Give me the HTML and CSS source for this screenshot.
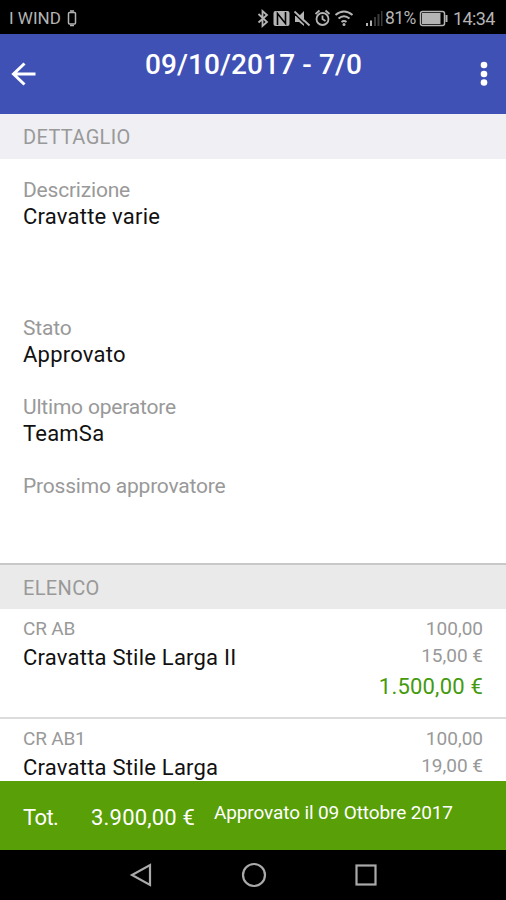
FILE: index.html
```html
<!DOCTYPE html>
<html lang="it">
<head>
<meta charset="utf-8">
<title>Dettaglio</title>
<link rel="stylesheet" href="styles.css">
</head>
<body>
<div class="screen">
  <div class="status">
    <span class="carrier">I WIND</span>
    <svg class="sim" width="10" height="17" viewBox="0 0 10 17"><path d="M3 1h4M3 15.500h4"/><rect x="1.500" y="2.500" width="7" height="11.500" rx="1"/></svg>
    <svg class="icons" width="132" height="22" viewBox="255 6 132 22">
      <path stroke-width="1.800" d="M258.500 13l8.500 8-4.500 4V10l4.500 4-8.500 7.500"/>
      <rect class="solid" x="273.500" y="10" width="16" height="15" rx="2"/><path class="cut" d="M277.500 24V12.500l8 10V11"/>
      <path class="solid" d="M295 15h4l5-5v15l-5-4h-4z"/><path class="cut" d="M294 12l15 15"/><path stroke-width="1.800" d="M294.500 10.500l15 14"/>
      <circle stroke-width="1.800" cx="322.500" cy="18" r="6"/><path stroke-width="1.800" d="M322.500 14.500V18l3 2M315.500 13l4-3.500M329.500 13l-4-3.500"/>
      <path stroke-width="2" d="M335.500 14q8.500-7 17 0M338.500 17.500q5.500-4.500 11 0M341.500 21q2.500-2 5 0"/><circle class="solid" cx="344" cy="23.500" r="1.500"/>
      <path class="solid" d="M366 22h2v3h-2zM370 19.500h2V25h-2z"/><path class="faint" d="M374 16h2v9h-2zM377.500 13h2v12h-2zM381 10h1.500v15H381z"/>
    </svg>
    <span class="percent">81%</span>
    <svg class="battery" width="30" height="17" viewBox="0 0 30 17"><rect x="1.500" y="1.500" width="24" height="14" rx="2"/><path class="solid" d="M3 3h18.500v11H3zM26.500 5h2v7h-2z"/></svg>
    <span class="clock">14:34</span>
  </div>
  <header class="bar">
    <svg class="back" width="26" height="26" viewBox="0 0 26 26"><path d="M24.500 13H3M13.500 2.500L2.500 13l11 10.500"/></svg>
    <h1 class="title">09/10/2017 - 7/0</h1>
    <svg class="more" width="8" height="26" viewBox="0 0 8 26"><circle cx="4" cy="4" r="3.300"/><circle cx="4" cy="13" r="3.300"/><circle cx="4" cy="21.500" r="3.300"/></svg>
  </header>
  <main class="content">
    <h2 class="section">DETTAGLIO</h2>
    <dl class="details">
      <div class="field tall"><dt>Descrizione</dt><dd>Cravatte varie</dd></div>
      <div class="field"><dt>Stato</dt><dd>Approvato</dd></div>
      <div class="field"><dt>Ultimo operatore</dt><dd>TeamSa</dd></div>
      <div class="field"><dt>Prossimo approvatore</dt></div>
    </dl>
    <h2 class="section list-head">ELENCO</h2>
    <div class="item">
      <div class="product"><div class="code">CR AB</div><div class="name">Cravatta Stile Larga II</div></div>
      <div class="figures"><div class="qty">100,00</div><div class="price">15,00 €</div><div class="sum">1.500,00 €</div></div>
    </div>
    <div class="item">
      <div class="product"><div class="code">CR AB1</div><div class="name">Cravatta Stile Larga</div></div>
      <div class="figures"><div class="qty">100,00</div><div class="price">19,00 €</div></div>
    </div>
  </main>
  <footer class="total"><span class="tot">Tot.</span><span class="amount">3.900,00 €</span><span class="approved">Approvato il 09 Ottobre 2017</span></footer>
  <nav class="nav">
    <svg width="24" height="26" viewBox="0 0 24 26"><path d="M21 3v20L3 13z"/></svg>
    <svg width="26" height="26" viewBox="0 0 26 26"><circle cx="13" cy="13" r="11"/></svg>
    <svg width="24" height="26" viewBox="0 0 24 26"><rect x="2.500" y="3.500" width="19" height="19"/></svg>
  </nav>
</div>
</body>
</html>
```
FILE: styles.css
```css
* { box-sizing: border-box; }
body { margin: 0; font-family: Roboto, "Liberation Sans", sans-serif; background: #fff; }
h1, h2, dl, dd { margin: 0; font-weight: 400; }
svg { display: block; flex: none; }
.screen { width: 506px; height: 900px; display: flex; flex-direction: column; overflow: hidden; white-space: nowrap; }
.status { height: 34px; flex: none; display: flex; align-items: center; background: #000; color: #b4b4b4; font-size: 18px; padding: 2px 0 0 9px; }
.carrier { width: 58px; font-size: 17px; }
.status svg { fill: none; stroke: #b4b4b4; stroke-width: 1.5; }
.status .solid { fill: #b4b4b4; stroke: none; }
.status .faint { fill: #3b3b3b; stroke: none; }
.status .cut { stroke: #000; stroke-width: 1.6; }
.icons { margin-left: 178px; }
.percent { width: 32px; margin-left: -2px; font-size: 17.5px; letter-spacing: -0.6px; }
.battery { margin-left: 2px; }
.clock { margin-left: 4px; letter-spacing: -0.6px; }
.bar { height: 80px; flex: none; display: flex; align-items: center; background: #3f51b5; color: #fff; padding: 0 18px 0 11px; }
.back { fill: none; stroke: #fff; stroke-width: 3; }
.title { flex: 1; height: 80px; padding-left: 108px; font-size: 28px; font-weight: 500; letter-spacing: 0.1px; line-height: 62px; }
.more { fill: #fff; }
.content { height: 667px; flex: none; overflow: hidden; }
.section { height: 45px; padding-left: 23px; font-size: 20px; letter-spacing: 0.35px; line-height: 46px; background: #efeff4; color: #999; }
.list-head { height: 46px; line-height: 47px; background: #eaeaea; border-top: 2px solid #c8c8c8; }
.details { height: 404px; padding: 18px 23px 0; font-size: 21px; line-height: 26px; }
.field { height: 79px; }
.tall { height: 138px; }
dt { letter-spacing: -0.2px; }
dt, .code, .qty, .price { color: #999; }
dd, .name { color: #111; font-size: 22px; letter-spacing: 0.22px; }
dd { line-height: 28px; }
.item { height: 110px; display: flex; justify-content: space-between; padding: 6px 23px 0; border-bottom: 2px solid #dcdcdc; }
.code, .qty, .price { font-size: 19px; line-height: 27px; }
.code { letter-spacing: -0.2px; }
.name { line-height: 31px; }
.figures { text-align: right; }
.sum { font-size: 22px; letter-spacing: 0.2px; line-height: 36px; color: #439a0c; }
.total { height: 69px; flex: none; display: flex; align-items: center; padding: 3px 0 0 23px; background: #589f08; color: #fff; font-size: 22px; }
.tot { width: 68px; letter-spacing: -0.6px; }
.amount { width: 123px; letter-spacing: 0.2px; }
.approved { font-size: 19px; letter-spacing: -0.12px; padding-bottom: 9px; }
.nav { height: 50px; flex: none; display: flex; align-items: center; gap: 87.5px; padding-left: 129px; background: #000; fill: none; stroke: #aaa; stroke-width: 2.2; }
```
